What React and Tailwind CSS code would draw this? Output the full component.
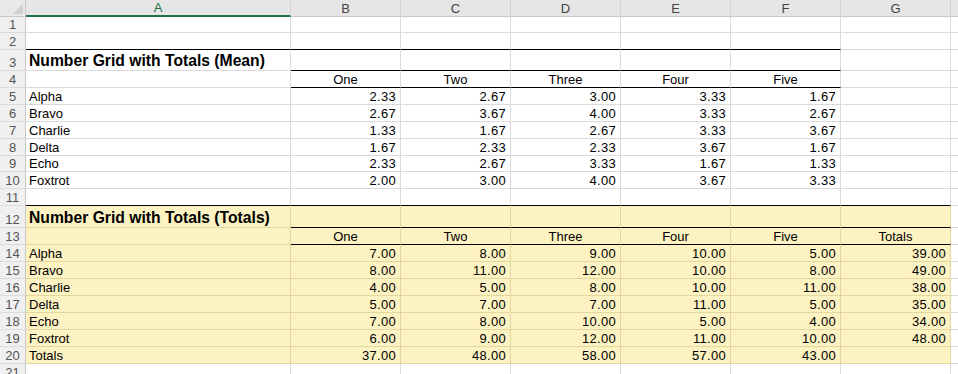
// Spreadsheet view — two number grids (mean / totals) in an Excel-like sheet.

const COL_WIDTHS = ['w-[265px]', 'w-[110px]', 'w-[110px]', 'w-[110px]', 'w-[110px]', 'w-[110px]', 'w-[110px]', 'w-[110px]'];
const COL_LETTERS = ['A', 'B', 'C', 'D', 'E', 'F', 'G', 'H'];

const ROW_HEIGHTS = {
  16: 'h-[16px]',
  17: 'h-[17px]',
  21: 'h-[21px]',
  22: 'h-[22px]',
};

const MEAN = [
  ['Alpha', '2.33', '2.67', '3.00', '3.33', '1.67'],
  ['Bravo', '2.67', '3.67', '4.00', '3.33', '2.67'],
  ['Charlie', '1.33', '1.67', '2.67', '3.33', '3.67'],
  ['Delta', '1.67', '2.33', '2.33', '3.67', '1.67'],
  ['Echo', '2.33', '2.67', '3.33', '1.67', '1.33'],
  ['Foxtrot', '2.00', '3.00', '4.00', '3.67', '3.33'],
];

const TOTALS = [
  ['Alpha', '7.00', '8.00', '9.00', '10.00', '5.00', '39.00'],
  ['Bravo', '8.00', '11.00', '12.00', '10.00', '8.00', '49.00'],
  ['Charlie', '4.00', '5.00', '8.00', '10.00', '11.00', '38.00'],
  ['Delta', '5.00', '7.00', '7.00', '11.00', '5.00', '35.00'],
  ['Echo', '7.00', '8.00', '10.00', '5.00', '4.00', '34.00'],
  ['Foxtrot', '6.00', '9.00', '12.00', '11.00', '10.00', '48.00'],
  ['Totals', '37.00', '48.00', '58.00', '57.00', '43.00', ''],
];

// cell kinds: 't' title, 'h' header (centered), 'l' label, 'n' number
function buildRows() {
  const rows = [];
  const blank = (n, h = 17, extra = {}) => ({ n, h, cells: [], ...extra });

  rows.push(blank(1, 16));
  rows.push(blank(2, 17, { black: [0, 1, 2, 3, 4, 5] }));
  rows.push({ n: 3, h: 21, cells: [{ t: 'Number Grid with Totals (Mean)', k: 't' }], black: [1, 2, 3, 4, 5] });
  rows.push({
    n: 4,
    h: 17,
    cells: [null, ...['One', 'Two', 'Three', 'Four', 'Five'].map(t => ({ t, k: 'h' }))],
    black: [1, 2, 3, 4, 5],
  });
  MEAN.forEach((r, i) => {
    rows.push({
      n: 5 + i,
      h: i === 4 ? 16 : 17,
      cells: r.map((t, j) => ({ t, k: j === 0 ? 'l' : 'n' })),
    });
  });
  rows.push(blank(11, 17, { black: [0, 1, 2, 3, 4, 5, 6] }));
  rows.push({ n: 12, h: 22, fill: true, cells: [{ t: 'Number Grid with Totals (Totals)', k: 't' }], black: [1, 2, 3, 4, 5, 6] });
  rows.push({
    n: 13,
    h: 17,
    fill: true,
    cells: [null, ...['One', 'Two', 'Three', 'Four', 'Five', 'Totals'].map(t => ({ t, k: 'h' }))],
    black: [1, 2, 3, 4, 5, 6],
  });
  TOTALS.forEach((r, i) => {
    rows.push({
      n: 14 + i,
      h: 17,
      fill: true,
      cells: r.map((t, j) => ({ t, k: j === 0 ? 'l' : 'n' })),
    });
  });
  rows.push(blank(21, 17));
  return rows;
}

const ROWS = buildRows();

function Cell({ col, cell, fill, black }) {
  const filled = fill && col < 7;
  const base = filled ? 'bg-[#fdf3c2] border-r-[#e2d7a0]' : 'bg-white border-r-[#dadada]';
  const bottom = black ? 'border-b-black' : filled ? 'border-b-[#e2d7a0]' : 'border-b-[#dadada]';

  let content = null;
  if (cell) {
    if (cell.k === 't') {
      content = (
        <span className="pl-[3px] pb-[1px] whitespace-nowrap text-[15.7px] font-bold text-black leading-none">
          {cell.t}
        </span>
      );
    } else if (cell.k === 'h') {
      content = <span className="w-full text-center pb-[1px] leading-none">{cell.t}</span>;
    } else if (cell.k === 'l') {
      content = <span className="pl-[3px] pb-[1px] leading-none">{cell.t}</span>;
    } else {
      content = <span className="w-full text-right pr-[4px] pb-[1px] leading-none tracking-[0.3px]">{cell.t}</span>;
    }
  }

  return (
    <div className={`${COL_WIDTHS[col]} shrink-0 h-full flex items-end border-r border-b ${base} ${bottom}`}>
      {content}
    </div>
  );
}

function Row({ row }) {
  const black = row.black ?? [];
  return (
    <div className={`flex ${ROW_HEIGHTS[row.h]}`}>
      <div className="w-[26px] shrink-0 h-full flex items-end justify-center pb-[1px] bg-[#f0f0f0] border-r border-b border-r-[#c8c8c8] border-b-[#dcdcdc] text-[13px] leading-none text-[#555]">
        {row.n}
      </div>
      {COL_WIDTHS.map((_, col) => (
        <Cell key={col} col={col} cell={row.cells[col]} fill={row.fill} black={black.includes(col)} />
      ))}
    </div>
  );
}

export default function App() {
  return (
    <div className="w-[958px] h-[374px] overflow-hidden bg-white font-['Liberation_Sans',Arial,sans-serif] text-[13px] text-black">
      {/* Column header strip */}
      <div className="flex h-[17px]">
        <div className="w-[26px] shrink-0 h-full bg-[#e8e8e8] border-r border-b border-[#c8c8c8] flex items-end justify-end p-[2px]">
          <div className="w-0 h-0 border-l-[10px] border-l-transparent border-b-[10px] border-b-[#cfcfcf]" />
        </div>
        {COL_LETTERS.map((l, i) => (
          <div
            key={l}
            className={`${COL_WIDTHS[i]} shrink-0 h-full flex items-center justify-center bg-[#e6e6e6] border-r border-r-[#d2d2d2] text-[13px] leading-none ${
              i === 0 ? 'border-b-2 border-b-[#217346] text-[#217346]' : 'border-b border-b-[#c8c8c8] text-[#444]'
            }`}
          >
            {l}
          </div>
        ))}
      </div>

      {ROWS.map(row => (
        <Row key={row.n} row={row} />
      ))}
    </div>
  );
}
